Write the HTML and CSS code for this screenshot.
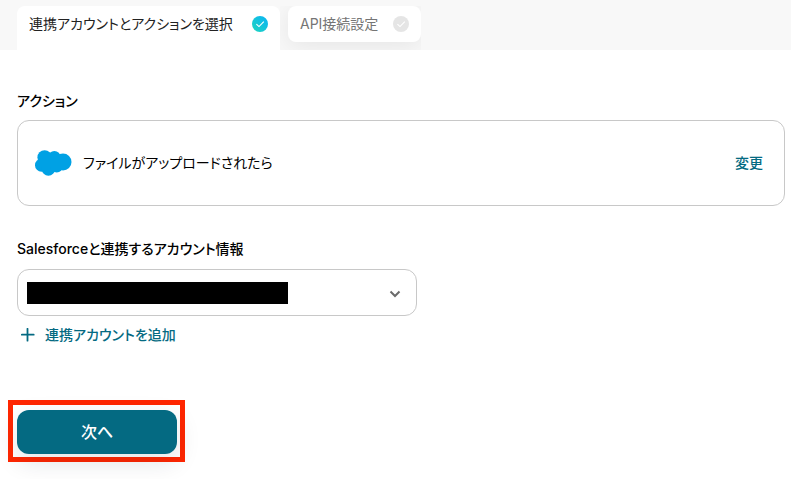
FILE: index.html
```html
<!DOCTYPE html>
<html lang="ja">
<head>
<meta charset="utf-8">
<meta name="viewport" content="width=device-width, initial-scale=1">
<title>連携アカウントとアクションを選択</title>
<link rel="stylesheet" href="styles.css">
</head>
<body>
<nav class="tabs">
  <button type="button" class="tab tab-active">連携アカウントとアクションを選択
    <svg class="check" viewBox="0 0 16 16" aria-hidden="true">
      <defs><linearGradient id="done" x1="0" y1="1" x2="1" y2="0"><stop offset="0" stop-color="#1fd6bd"/><stop offset="0.7" stop-color="#0fbde6"/><stop offset="1" stop-color="#0fb4f0"/></linearGradient></defs>
      <circle cx="8" cy="8" r="8" fill="url(#done)"/>
      <path d="M4.4 8.1 7 10.6 11.8 5.7" fill="none" stroke="#fff" stroke-width="1.1"/>
    </svg>
  </button>
  <div class="tab-slot">
    <button type="button" class="tab tab-next">API接続設定
      <svg class="check" viewBox="0 0 16 16" aria-hidden="true">
        <circle cx="8" cy="8" r="8" fill="#e5e5e5"/>
        <path d="M4.4 8.1 7 10.6 11.8 5.7" fill="none" stroke="#fff" stroke-width="1.1"/>
      </svg>
    </button>
  </div>
</nav>
<main class="content">
  <section class="action">
    <h2 class="label">アクション</h2>
    <div class="card">
      <svg class="cloud" viewBox="0 0 37 26" aria-hidden="true">
        <g fill="#00a1e4">
          <circle cx="9.6" cy="7.4" r="7.2"/><circle cx="19.4" cy="7.2" r="6.2"/><circle cx="28" cy="12" r="8.5"/>
          <circle cx="6.5" cy="15.2" r="6.5"/><circle cx="13.4" cy="19.2" r="6.6"/><circle cx="21.7" cy="16.3" r="6.2"/>
          <path d="M8 7h20v9H8z"/>
        </g>
      </svg>
      <span class="card-text">ファイルがアップロードされたら</span>
      <a class="link" href="#">変更</a>
    </div>
  </section>
  <section class="account">
    <label class="label" for="account">Salesforceと連携するアカウント情報</label>
    <div class="select-wrap">
      <select id="account" class="select"><option></option></select>
      <span class="redaction"></span>
      <svg class="chevron" viewBox="0 0 12 8" aria-hidden="true"><path d="M1.5 1.5 6 6l4.5-4.5" fill="none" stroke="#6b6b6b" stroke-width="2"/></svg>
    </div>
    <a class="link add" href="#">
      <svg class="plus" viewBox="0 0 14 14" aria-hidden="true"><path d="M6.5.8v11.9M.8 6.7h11.9" stroke="#046a82" stroke-width="1.8" stroke-linecap="round"/></svg>
      連携アカウントを追加
    </a>
  </section>
  <div class="highlight"><button type="submit" class="submit">次へ</button></div>
</main>
</body>
</html>
```
FILE: styles.css
```css
* { box-sizing: border-box; }
body {
  margin: 0;
  background: #fff;
  color: #000;
  font: 14px/20px Inter, "Noto Sans CJK JP", sans-serif;
  font-feature-settings: "palt";
}
button, select { font: inherit; font-feature-settings: inherit; }
.tabs {
  display: flex;
  align-items: stretch;
  height: 50px;
  padding: 6px 0 0 17px;
  background: #f8f8f8;
}
.tab {
  display: flex;
  align-items: center;
  justify-content: space-between;
  gap: 12px;
  height: 36px;
  padding: 0 12px;
  border: 0;
  background: #fff;
  white-space: nowrap;
}
.tab-active {
  min-width: 263px;
  height: 44px;
  padding-bottom: 8px;
  border-radius: 8px 8px 0 0;
  color: #222;
}
.tab-slot {
  padding-left: 8px;
  overflow: hidden;
}
.tab-next {
  min-width: 133px;
  border-radius: 8px;
  color: #757575;
  box-shadow: 0 4px 24px rgba(0, 0, 0, 0.08);
}
.check { width: 16px; height: 16px; }
.content { padding: 41px 6px 17px 17px; }
.label {
  display: block;
  margin: 0 0 9px;
  font-size: 14px;
  font-weight: 500;
}
.card {
  display: flex;
  align-items: center;
  height: 86px;
  padding: 0 21px 0 17px;
  border: 1px solid #c8c8c8;
  border-radius: 12px;
}
.cloud { width: 37px; height: 26px; margin-right: 11px; }
.link { color: #046a82; font-weight: 500; text-decoration: none; }
.card .link { margin-left: auto; }
.account { margin-top: 33px; }
.account .label { margin-bottom: 10px; }
.select-wrap { position: relative; max-width: 400px; }
.select {
  display: block;
  width: 100%;
  height: 47px;
  padding: 0 36px 0 12px;
  border: 1px solid #c8c8c8;
  border-radius: 12px;
  background: #fff;
  appearance: none;
}
.redaction {
  position: absolute;
  top: 13px;
  left: 10px;
  width: 261px;
  height: 22px;
  background: #000;
}
.chevron {
  position: absolute;
  top: 21px;
  right: 16px;
  width: 12px;
  height: 8px;
}
.add {
  display: inline-flex;
  align-items: center;
  gap: 10px;
  margin: 9px 0 0 4px;
}
.plus { width: 14px; height: 14px; }
.highlight {
  width: 177px;
  margin: 53px 0 0 -9px;
  padding: 5px 4px 3px;
  border: 5px solid #ff2600;
}
.submit {
  display: block;
  width: 160px;
  height: 44px;
  border: 0;
  border-radius: 12px;
  background: #046a82;
  color: #fff;
  font-size: 16px;
  font-weight: 500;
  box-shadow: 0 8px 24px rgba(0, 40, 60, 0.12);
}
```
